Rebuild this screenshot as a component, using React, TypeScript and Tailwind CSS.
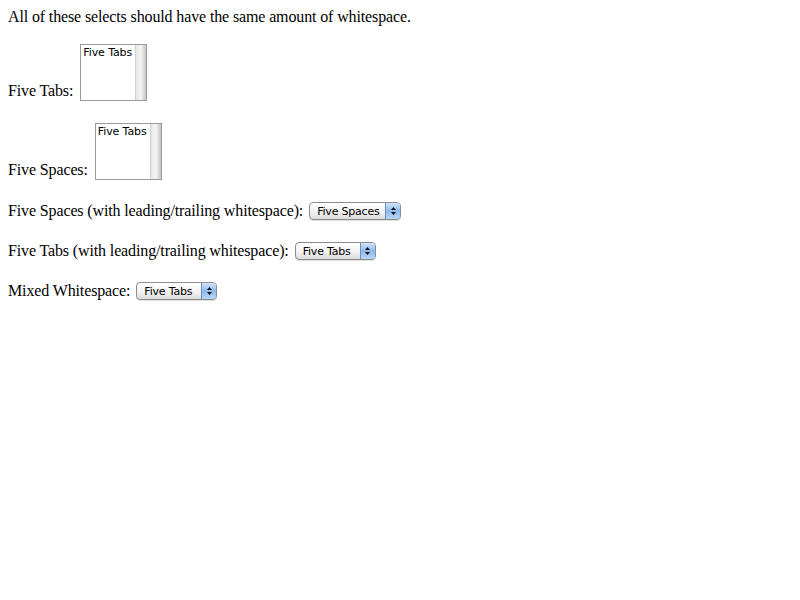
import React from 'react';

const serif = { fontFamily: '"Liberation Serif", "Times New Roman", serif' };

function ListBox() {
  return (
    <div className="ml-[7px] my-[2px] flex h-[57px] w-[67px] border border-[#9a9a9a] bg-white">
      <div className="flex-1 pl-[2px] pt-[1px] text-[11px] leading-[13px] text-black [font-family:'DejaVu_Sans',sans-serif] tracking-[-0.1px]">
        Five Tabs
      </div>
      <div className="w-[11px] bg-gradient-to-r from-[#e8e8e8] via-[#f4f4f4] to-[#c4c4c4] border-l border-[#d0d0d0]" />
    </div>
  );
}

function Popup({ label, width }: { label: string; width: string }) {
  return (
    <div
      className={`ml-[6px] mt-[4px] mb-[2px] flex h-[18px] ${width} overflow-hidden rounded-[4px] border border-[#8c8c8c] bg-gradient-to-b from-white via-[#f3f3f3] to-[#dcdcdc] shadow-[0_1px_0_rgba(0,0,0,0.12)]`}
    >
      <div className="flex flex-1 items-center pl-[7px] text-[11px] leading-none text-black [font-family:'DejaVu_Sans',sans-serif] tracking-[-0.2px]">
        {label}
      </div>
      <div className="flex w-[15px] flex-col items-center justify-center gap-[2px] border-l border-[#6d8fb8] bg-gradient-to-b from-[#d2e4fa] via-[#8db9ec] to-[#b8d6f8]">
        <svg width="5" height="3" viewBox="0 0 5 3">
          <path d="M2.5 0 L5 3 L0 3 Z" fill="#111" />
        </svg>
        <svg width="5" height="3" viewBox="0 0 5 3">
          <path d="M0 0 L5 0 L2.5 3 Z" fill="#111" />
        </svg>
      </div>
    </div>
  );
}

export default function App() {
  return (
    <div className="min-h-screen bg-white p-2 text-[16px] tracking-[-0.13px] text-black" style={serif}>
      <p className="leading-[18px]">All of these selects should have the same amount of whitespace.</p>

      <div className="mt-4 flex items-end">
        <span className="mb-[3px] leading-[18px]">Five Tabs:</span>
        <ListBox />
      </div>

      <div className="mt-[18px] flex items-end">
        <span className="mb-[3px] leading-[18px]">Five Spaces:</span>
        <ListBox />
      </div>

      <div className="mt-4 flex items-end">
        <span className="mb-[2px] leading-[18px]">Five Spaces (with leading/trailing whitespace):</span>
        <Popup label="Five Spaces" width="w-[92px]" />
      </div>

      <div className="mt-4 flex items-end">
        <span className="mb-[2px] leading-[18px]">Five Tabs (with leading/trailing whitespace):</span>
        <Popup label="Five Tabs" width="w-[81px]" />
      </div>

      <div className="mt-4 flex items-end">
        <span className="mb-[2px] leading-[18px]">Mixed Whitespace:</span>
        <Popup label="Five Tabs" width="w-[81px]" />
      </div>
    </div>
  );
}
